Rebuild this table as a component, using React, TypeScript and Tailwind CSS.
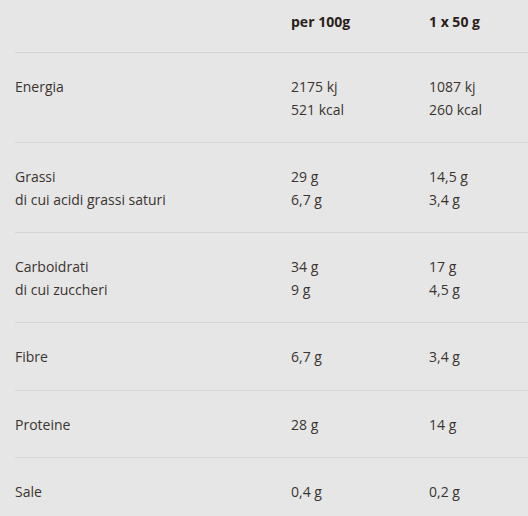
const rows: { label: string[]; per100: string[]; portion: string[] }[] = [
  { label: ["Energia"], per100: ["2175 kj", "521 kcal"], portion: ["1087 kj", "260 kcal"] },
  { label: ["Grassi", "di cui acidi grassi saturi"], per100: ["29 g", "6,7 g"], portion: ["14,5 g", "3,4 g"] },
  { label: ["Carboidrati", "di cui zuccheri"], per100: ["34 g", "9 g"], portion: ["17 g", "4,5 g"] },
  { label: ["Fibre"], per100: ["6,7 g"], portion: ["3,4 g"] },
  { label: ["Proteine"], per100: ["28 g"], portion: ["14 g"] },
  { label: ["Sale"], per100: ["0,4 g"], portion: ["0,2 g"] },
];

function Cell({ lines }: { lines: string[] }) {
  return (
    <div className="flex flex-col">
      {lines.map((l) => (
        <span key={l} className="leading-[22.5px]">
          {l}
        </span>
      ))}
    </div>
  );
}

export default function App() {
  return (
    <div
      className="min-h-[516px] w-[528px] bg-[#e6e6e6] pl-[15px] text-[14px] text-[#3a3430]"
      style={{ fontFamily: '"Open Sans", "Noto Sans", sans-serif' }}
    >
      {/* header */}
      <div className="grid grid-cols-[276px_138px_1fr] border-b border-[#d6d6d6] pt-[11px] pb-[19px]">
        <div />
        <div className="font-bold leading-[22px] text-[#2a1f1a]">per 100g</div>
        <div className="font-bold leading-[22px] text-[#2a1f1a]">1 x 50 g</div>
      </div>

      {rows.map((r, i) => (
        <div
          key={r.label[0]}
          className={`grid grid-cols-[276px_138px_1fr] pt-[23px] pb-[21px] ${
            i < rows.length - 1 ? "border-b border-[#d6d6d6]" : ""
          }`}
        >
          <Cell lines={r.label} />
          <Cell lines={r.per100} />
          <Cell lines={r.portion} />
        </div>
      ))}
    </div>
  );
}
